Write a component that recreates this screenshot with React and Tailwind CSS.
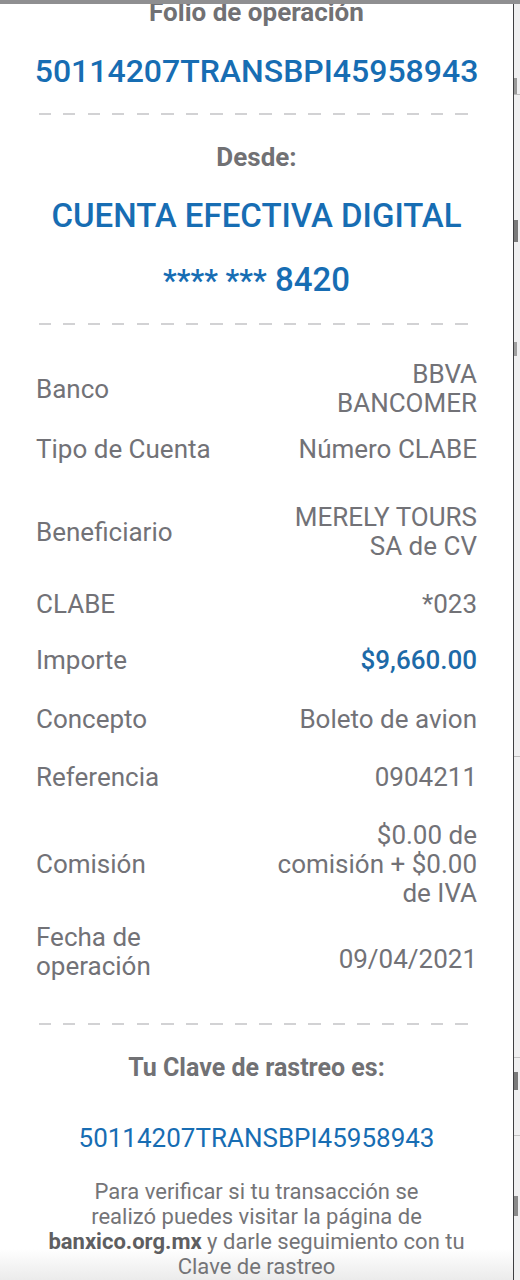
import React from "react";

const rows = [
  { label: "Banco", value: ["BBVA", "BANCOMER"], gap: "mt-[35px]" },
  { label: "Tipo de Cuenta", value: ["Número CLABE"], gap: "mt-[17px]" },
  { label: "Beneficiario", value: ["MERELY TOURS", "SA de CV"], gap: "mt-[39px]" },
  { label: "CLABE", value: ["*023"], gap: "mt-[29px]" },
  { label: "Importe", value: ["$9,660.00"], gap: "mt-[27px]", blue: true },
  { label: "Concepto", value: ["Boleto de avion"], gap: "mt-[30px]" },
  { label: "Referencia", value: ["0904211"], gap: "mt-[29px]" },
  { label: "Comisión", value: ["$0.00 de", "comisión + $0.00", "de IVA"], gap: "mt-[29px]" },
];

function Dashes({ className }) {
  return (
    <div
      className={
        "ml-[39px] h-[2px] w-[429px] bg-[repeating-linear-gradient(to_right,#d2d2d4_0_12px,transparent_12px_24.5px)] " +
        className
      }
    />
  );
}

function Row({ label, value, gap, blue }) {
  return (
    <div className={"flex items-center justify-between px-[36px] text-[26px] leading-[29px] " + gap}>
      <div className="w-[200px] text-[#727277]">{label}</div>
      <div
        className={
          "w-[206px] text-right " +
          (blue ? "font-medium text-[#1d6aa8]" : "text-[#727277]")
        }
      >
        {value.map((line) => (
          <div key={line}>{line}</div>
        ))}
      </div>
    </div>
  );
}

export default function App() {
  return (
    <div className="flex h-[1280px] w-[520px] flex-col overflow-hidden bg-white font-['Roboto',sans-serif]">
      <div className="h-[4px] w-full shrink-0 bg-[#8f8f91]" />
      <div className="flex flex-1 overflow-hidden">
        <div className="flex w-[513px] flex-col overflow-hidden bg-[linear-gradient(to_bottom,#ffffff_1245px,#ebebeb_1276px)]">
          <div className="-mt-[7px] text-center text-[26px] font-bold leading-[30px] text-[#717174]">
            Folio de operación
          </div>
          <div className="mt-[24px] text-center text-[32px] font-medium leading-[40px] text-[#176db3]">
            50114207TRANSBPI45958943
          </div>
          <Dashes className="mt-[22px]" />
          <div className="mt-[27px] text-center text-[26px] font-bold leading-[30px] text-[#717174]">
            Desde:
          </div>
          <div className="mt-[24px] text-center text-[33px] font-medium leading-[39px] text-[#176db3]">
            CUENTA EFECTIVA DIGITAL
          </div>
          <div className="mt-[25px] text-center text-[33px] font-medium leading-[40px] text-[#176db3]">
            <span className="text-[31px]">**** ***</span> 8420
          </div>
          <Dashes className="mt-[22px]" />

          {rows.map((r) => (
            <Row key={r.label} {...r} />
          ))}

          <div className="mt-[15px] flex items-center justify-between px-[36px] text-[26px] leading-[29px] text-[#727277]">
            <div className="w-[200px]">Fecha de operación</div>
            <div className="mt-[14px] w-[206px] text-right">09/04/2021</div>
          </div>

          <Dashes className="mt-[42px]" />

          <div className="mt-[28px] text-center text-[25px] font-bold leading-[30px] text-[#717174]">
            Tu Clave de rastreo es:
          </div>
          <div className="mt-[40px] text-center text-[26px] leading-[30px] text-[#176db3]">
            50114207TRANSBPI45958943
          </div>
          <p className="mt-[26px] text-center text-[22px] leading-[25px] text-[#747477]">
            Para verificar si tu transacción se
            <br />
            realizó puedes visitar la página de
            <br />
            <span className="font-bold text-[#5e5e61]">banxico.org.mx</span> y darle seguimiento con tu
            <br />
            Clave de rastreo
          </p>
        </div>

        <div className="flex w-[7px] flex-col border-l-[1.5px] border-[#3f3f42] bg-[#efeff0]">
          <div className="h-[74px]" />
          <div className="h-[16px] w-[3px] bg-[#9a9a9a]" />
          <div className="h-[1px] bg-[#bdbdbd]" />
          <div className="h-[125px]" />
          <div className="h-[22px] w-[4px] bg-[#7a7a7a]" />
          <div className="h-[100px]" />
          <div className="h-[14px] w-[3px] bg-[#a0a0a0]" />
          <div className="h-[400px]" />
          <div className="h-[1px] bg-[#bdbdbd]" />
          <div className="h-[300px]" />
          <div className="h-[1px] bg-[#c4c4c4]" />
          <div className="h-[14px]" />
          <div className="h-[18px] w-[4px] bg-[#7a7a7a]" />
          <div className="h-[45px]" />
          <div className="h-[1px] bg-[#c4c4c4]" />
          <div className="h-[60px]" />
          <div className="h-[20px] w-[4px] bg-[#8a8a8a]" />
        </div>
      </div>
    </div>
  );
}
